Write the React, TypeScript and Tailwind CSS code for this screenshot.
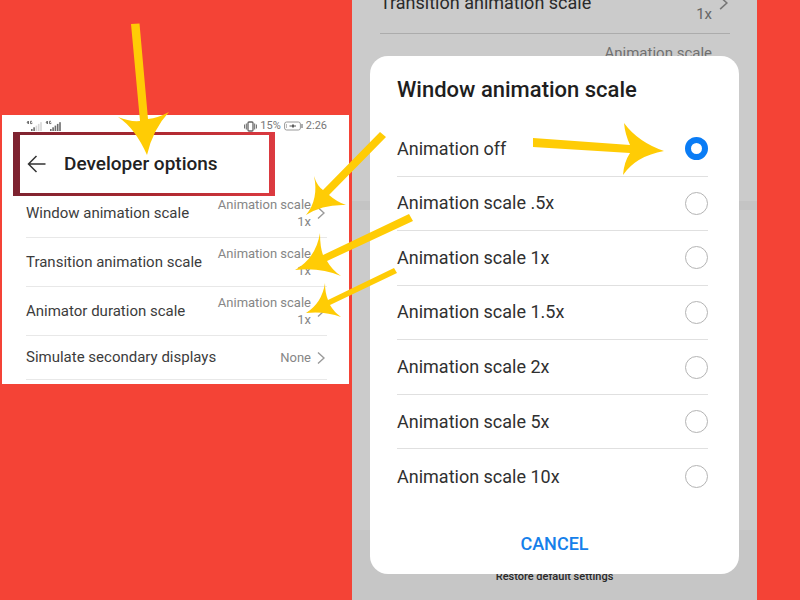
import { useState } from "react";

type Setting = { label: string; value: string; caption?: string };

const settings: Setting[] = [
  { label: "Window animation scale", caption: "Animation scale", value: "1x" },
  { label: "Transition animation scale", caption: "Animation scale", value: "1x" },
  { label: "Animator duration scale", caption: "Animation scale", value: "1x" },
  { label: "Simulate secondary displays", value: "None" },
];

const scales = [
  "Animation off",
  "Animation scale .5x",
  "Animation scale 1x",
  "Animation scale 1.5x",
  "Animation scale 2x",
  "Animation scale 5x",
  "Animation scale 10x",
];

const arrows = [
  "M131 24 L139.5 23.5 L148 119 Q158 118 169 112 Q153 129 147 155 Q135 128 118 117 Q130 122 140 121 Z",
  "M380 132 L386 137 L329 195 Q337 202 346 205 Q323 204 306 215 Q319 199 314 176 Q317 186 323 190 Z",
  "M409 214 L413 221 L327 261 Q332 270 341 276 Q320 267 295 270 Q316 258 320 233 Q320 247 323 255 Z",
  "M394 268 L397 273 L330 305 Q334 312 341 317 Q325 311 306 313 Q322 303 325 283 Q325 293 328 300 Z",
  "M533 138 L630 145 Q625 134 624 123 Q638 142 664 151 Q636 156 623 175 Q624 162 630 153 L533 147 Z",
];

function Chevron({ className }: { className: string }) {
  return (
    <svg viewBox="0 0 8 14" className={className} fill="none" stroke="currentColor" strokeWidth="1.4" aria-hidden="true">
      <path d="M1 1.5 L7 7 L1 12.5" />
    </svg>
  );
}

function Signal({ level }: { level: number }) {
  return (
    <svg viewBox="0 0 17 12" className="h-3 w-[17px]" aria-hidden="true">
      <path d="M2 1 L1 3 H3 M2.5 1 V4 M6 1.3 H4.5 V3.6 H6 V2.6" stroke="#555" strokeWidth=".8" fill="none" />
      {[0, 1, 2, 3, 4].map((i) => (
        <rect key={i} x={5 + i * 2.3} y={9 - i * 1.7} width="1.6" height={2 + i * 1.7} fill={i < level ? "#6b6b6b" : "#d6d6d6"} />
      ))}
    </svg>
  );
}

function StatusBar() {
  return (
    <div className="flex h-[17px] items-end justify-between pr-[22px] pl-6 text-[11px] leading-3 text-[#777]">
      <div className="flex gap-[2px]">
        <Signal level={2} />
        <Signal level={5} />
      </div>
      <div className="flex items-center gap-[3px]">
        <svg viewBox="0 0 13 11" className="h-[11px] w-[13px]" fill="none" stroke="#666" aria-hidden="true">
          <rect x="4" y="1" width="5" height="9" rx="1" strokeWidth="1.3" />
          <path d="M.6 3.5 V7.5 M2.3 2.5 V8.5 M10.7 2.5 V8.5 M12.4 3.5 V7.5" strokeWidth="1" />
        </svg>
        <span>15%</span>
        <svg viewBox="0 0 19 10" className="h-[10px] w-[19px]" fill="none" stroke="#999" aria-hidden="true">
          <rect x=".6" y="1" width="15.8" height="8" rx="2" />
          <path d="M18 3 V7" strokeWidth="1.6" />
          <path d="M2.5 3 V7" stroke="#bbb" />
          <path d="M5.5 5 H12" stroke="#555" strokeWidth="1" />
          <path d="M9 3.5 V6.5" stroke="#555" strokeWidth="1.8" />
        </svg>
        <span>2:26</span>
      </div>
    </div>
  );
}

function DeveloperOptions() {
  return (
    <section className="mt-[115px] self-start bg-white pb-1">
      <StatusBar />
      <div className="relative z-10 mr-[74px] -mb-[7px] ml-[11px] bg-linear-to-r from-[#7d2330] via-[#a8272f] to-[#dc3a40] py-[3px] pr-[6px] pl-[7px]">
        <header className="flex h-[58px] items-center bg-white pl-[7px]">
          <button type="button" aria-label="Back" className="mr-[18px] text-[#333]">
            <svg viewBox="0 0 19 18" className="h-[18px] w-[19px]" fill="none" stroke="currentColor" strokeWidth="1.5" aria-hidden="true">
              <path d="M18.5 9 H1.5 M9.5 1 L1.5 9 L9.5 17" />
            </svg>
          </button>
          <h1 className="text-[19px] font-medium whitespace-nowrap text-[#222]">Developer options</h1>
        </header>
      </div>
      <ul className="mr-[22px] ml-6">
        {settings.map((s) => (
          <li key={s.label} className="border-b border-[#e8e8e8]">
            <button
              type="button"
              className={`flex w-full items-center pr-[2px] text-left whitespace-nowrap ${s.caption ? "h-12" : "h-[43px]"}`}
            >
              <span className="flex-1 text-[15px] text-[#3c3c3c]">{s.label}</span>
              <span className="text-right text-[13px] leading-[17px] text-[#868686]">
                {s.caption && <span className="block">{s.caption}</span>}
                {s.value}
              </span>
              <Chevron className="ml-[6px] h-[14px] w-2 text-[#9a9a9a]" />
            </button>
          </li>
        ))}
      </ul>
    </section>
  );
}

function ScaleDialog() {
  const [selected, setSelected] = useState(scales[0]);
  return (
    <div role="dialog" aria-labelledby="dialog-title" className="absolute inset-x-[18px] top-14 rounded-[18px] bg-white pr-[31px] pl-[27px]">
      <h2 id="dialog-title" className="pt-4 pb-[14px] text-[22px] leading-9 font-medium text-[#1e1e1e]">
        Window animation scale
      </h2>
      <div role="radiogroup" aria-labelledby="dialog-title" className="grid h-[382px] auto-rows-fr divide-y divide-[#e0e0e0]">
        {scales.map((scale) => (
          <label key={scale} className="flex items-center justify-between text-lg text-[#303030]">
            {scale}
            <input
              type="radio"
              name="scale"
              checked={selected === scale}
              onChange={() => setSelected(scale)}
              className="size-[23px] appearance-none rounded-full border border-[#b4b4b4] bg-white checked:border-[6px] checked:border-[#0a7cf5]"
            />
          </label>
        ))}
      </div>
      <div className="flex h-[70px] justify-center pt-[26px]">
        <button type="button" className="h-7 pl-1 text-lg font-medium text-[#1580ea]">
          CANCEL
        </button>
      </div>
    </div>
  );
}

function SettingsBehindDialog() {
  return (
    <section className="relative flex h-screen flex-col overflow-hidden bg-[#cbcbcb] text-[#2a2a2a]">
      <div className="-mt-7 mr-[27px] ml-7 flex h-[62px] shrink-0 items-center border-b border-[#acacac]">
        <span className="flex-1 text-lg whitespace-nowrap">Transition animation scale</span>
        <span className="pt-6 text-[15px] text-[#666]">1x</span>
        <Chevron className="mr-[2px] ml-[7px] h-4 w-[9px] text-[#777]" />
      </div>
      <div className="mr-[45px] flex h-[167px] shrink-0 justify-end pt-2 text-[15px] text-[#707070]">Animation scale</div>
      <div className="h-[9px] shrink-0 bg-[#c4c4c4]" />
      <div className="flex-1" />
      <div className="h-[70px] shrink-0 bg-[#c6c6c6] pt-[39px] text-center text-[11px] leading-4 font-medium">
        Restore default settings
      </div>
      <ScaleDialog />
    </section>
  );
}

export default function App() {
  return (
    <main className="relative grid min-h-screen grid-cols-[347fr_405fr] gap-[3px] bg-[#f44336] pr-[43px] pl-[2px] font-[Roboto,'Noto_Sans',sans-serif]">
      <DeveloperOptions />
      <SettingsBehindDialog />
      <svg
        viewBox="0 0 800 600"
        preserveAspectRatio="none"
        className="pointer-events-none absolute inset-0 z-20 h-full w-full"
        fill="#ffcc05"
        aria-hidden="true"
      >
        {arrows.map((d) => (
          <path key={d} d={d} />
        ))}
      </svg>
    </main>
  );
}
